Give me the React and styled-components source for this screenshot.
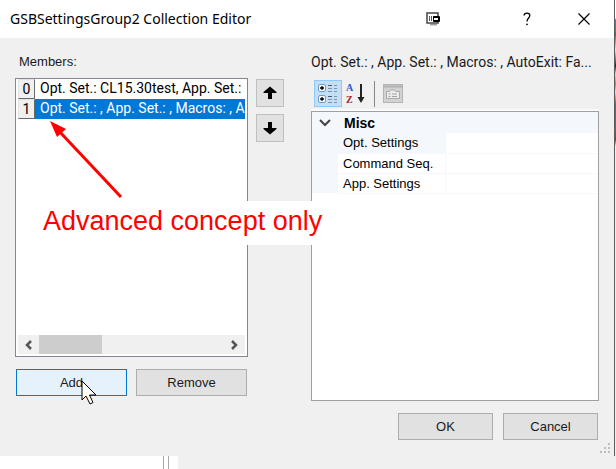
import React from "react";
import styled, { createGlobalStyle, css } from "styled-components";

const GlobalStyle = createGlobalStyle`
  *, *::before, *::after { box-sizing: border-box; }
  body {
    margin: 0;
    background: #f0f0f0;
    color: #1b1b1b;
    font: 13px/20px "Liberation Sans", Arial, sans-serif;
  }
  button { font: inherit; color: inherit; padding: 0; margin: 0; cursor: default; }
`;

const Desktop = styled.div`
  min-height: 100vh;
  display: flex;
  flex-direction: column;
`;

const DialogArea = styled.div`
  flex: 1;
  display: flex;
`;

const Dialog = styled.section`
  position: relative;
  flex: 1;
  min-width: 0;
  display: flex;
  flex-direction: column;
  background: #f0f0f0;
  border-right: 1px solid #5c5c5c;
`;

const BehindEdge = styled.div`
  width: 1px;
  background: linear-gradient(
    #fff 18px, #5577bb 20px, #5577bb 30px, #a04048 34px, #e8e8e8 50px,
    #222 66px, #dcdcdc 74px, #a98a60 84px, #e0e0e0 92px, #1b78c8 104px,
    #1b78c8 130px, #6a4a30 140px, #f0f0f0 146px
  );
`;

const TitleBar = styled.header`
  height: 38px;
  display: flex;
  align-items: center;
  background: #fff;
  padding-left: 10px;
`;

const Title = styled.h1`
  flex: 1;
  margin: 0;
  color: #000;
  font: 400 14px/20px "Noto Sans", "Open Sans", sans-serif;
  white-space: nowrap;
`;

const CaptionButton = styled.button`
  width: ${(p) => p.$width}px;
  height: 38px;
  display: grid;
  place-items: center;
  border: 0;
  background: transparent;
  color: #000;
  svg { display: block; }
`;

const Body = styled.div`
  flex: 1;
  display: grid;
  grid-template-columns: minmax(0, 269fr) minmax(0, 288fr);
  column-gap: 27px;
  padding: 0 15px 16px;
`;

const MembersArea = styled.div`
  display: grid;
  grid-template-columns: minmax(0, 1fr) 28px;
  column-gap: 8px;
  padding-bottom: 44px;
`;

const Column = styled.div`
  display: flex;
  flex-direction: column;
  min-width: 0;
`;

const PanelLabel = styled.div`
  height: 40px;
  padding: 14px 0 6px 4px;
`;

const Description = styled.div`
  height: 40px;
  padding: 14px 0 6px;
  font: 14px/20px Roboto, sans-serif;
  overflow: hidden;
  white-space: nowrap;
`;

const ListFrame = styled.div`
  flex: 1;
  display: flex;
  flex-direction: column;
  justify-content: space-between;
  background: #fff;
  border: 1px solid #828790;
  padding: 0 2px 2px;
`;

const MemberList = styled.ul`
  list-style: none;
  margin: 0;
  padding: 0;
`;

const Member = styled.li`
  height: 20px;
  display: flex;
  overflow: hidden;
  white-space: nowrap;
  color: #000;
  font: 14px/20px Roboto, sans-serif;
`;

const MemberIndex = styled.span`
  width: 17px;
  flex: none;
  text-align: center;
  background: #f0f0f0;
  border: 1px solid;
  border-color: #e3e3e3 #696969 #696969 #e3e3e3;
  line-height: 19px;
`;

const MemberText = styled.span`
  flex: 1;
  min-width: 0;
  overflow: hidden;
  padding-left: 5px;
  line-height: 18px;
  ${(p) => p.$selected && css`
    background: #0078d7;
    color: #fff;
  `}
`;

const ScrollBar = styled.div`
  height: 19px;
  display: flex;
  background: #f0f0f0;
`;

const ScrollArrow = styled.button`
  width: 21px;
  border: 0;
  background: transparent;
  display: grid;
  place-items: center;
`;

const ScrollTrack = styled.div`
  flex: 1;
`;

const ScrollThumb = styled.div`
  width: 34%;
  height: 100%;
  background: #cdcdcd;
`;

const ButtonRow = styled.div`
  display: flex;
  justify-content: ${(p) => (p.$end ? "flex-end" : "stretch")};
  gap: ${(p) => (p.$end ? 10 : 9)}px;
  padding: 12px 1px 0;
`;

const PushButton = styled.button`
  height: 27px;
  flex: ${(p) => (p.$fixed ? "0 0 95px" : "1")};
  border: 1px solid #adadad;
  background: #e1e1e1;
  ${(p) => p.$hot && css`
    border-color: #0078d7;
    background: #e5f1fb;
  `}
`;

const OrderColumn = styled.div`
  display: flex;
  flex-direction: column;
  gap: 7px;
  padding-top: 41px;
`;

const OrderButton = styled.button`
  width: 28px;
  height: 28px;
  display: grid;
  place-items: center;
  border: 1px solid #bfbfbf;
  background: #e1e1e1;
`;

const ToolBar = styled.div`
  height: 33px;
  display: flex;
  align-items: flex-start;
  padding: 2px 3px 0;
  border-bottom: 2px solid #fafafa;
`;

const ToolButton = styled.button`
  width: 28px;
  height: 27px;
  display: grid;
  place-items: center;
  border: 1px solid ${(p) => (p.$on ? "#90c8f6" : "transparent")};
  background: ${(p) => (p.$on ? "#c4dff5" : "transparent")};
`;

const ToolSeparator = styled.span`
  width: 1px;
  height: 26px;
  margin: 1px 4px;
  background: #868686;
`;

const PropertyFrame = styled.div`
  flex: 1;
  background: #fff;
  border: 1px solid #a0a0a0;
`;

const PropertyTable = styled.table`
  width: 100%;
  border-collapse: collapse;
  table-layout: fixed;
  color: #000;
`;

const Gutter = styled.td`
  height: 20px;
  padding: 0;
  background: #f4f7fc;
  svg { display: block; margin: 0 auto; }
`;

const Category = styled.th`
  height: 21px;
  padding: 0 0 0 6px;
  text-align: left;
  font: 700 14px/20px "Liberation Sans", Arial, sans-serif;
  background: #f4f7fc;
`;

const PropertyName = styled.th`
  padding: 0 0 0 5px;
  text-align: left;
  font-weight: 400;
  line-height: 19px;
  white-space: nowrap;
  border-bottom: 1px solid #f4f7fc;
  border-right: 1px solid #f4f7fc;
  background: ${(p) => (p.$current ? "#f4f7fc" : "#fff")};
`;

const PropertyValue = styled.td`
  padding: 0;
  border-bottom: 1px solid #f4f7fc;
`;

const SizeGrip = styled.svg`
  position: absolute;
  right: 2px;
  bottom: 2px;
`;

const WindowBelow = styled.footer`
  height: 13px;
  display: flex;
`;

const BelowPane = styled.div`
  width: ${(p) => p.$width};
  background: #fff;
  border-right: ${(p) => (p.$edge ? "1px solid #a8a8a8" : "0")};
`;

const Annotation = styled.div`
  position: absolute;
  left: 28px;
  top: 201px;
  width: 307px;
  height: 44px;
  padding-left: 15px;
  background: #fff;
  color: #f00;
  font: 27px/41px "Liberation Sans", Arial, sans-serif;
  white-space: nowrap;
`;

const AnnotationArrow = styled.svg`
  position: absolute;
  left: 48px;
  top: 119px;
  pointer-events: none;
`;

const Pointer = styled.svg`
  position: absolute;
  left: 81px;
  top: 380px;
  pointer-events: none;
`;

const members = [
  { text: "Opt. Set.: CL15.30test, App. Set.:", selected: false },
  { text: "Opt. Set.: , App. Set.: , Macros: , A", selected: true },
];

const properties = ["Opt. Settings", "Command Seq.", "App. Settings"];

function CaptureIcon() {
  return (
    <svg width="15" height="14" viewBox="0 0 15 14">
      <rect x="1" y="1" width="11" height="10" fill="#fff" stroke="#444" strokeWidth="1.5" />
      <path d="M3.500 4v5M5.500 4v5M7.500 4v5" stroke="#555" />
      <path d="M4 12.800h7" stroke="#777" />
      <rect x="7" y="4" width="7" height="6" rx="1" fill="#000" />
      <path d="M8 6h4v2H8z" fill="#fff" />
    </svg>
  );
}

function OrderArrow({ down }) {
  return (
    <svg width="14" height="14" viewBox="0 0 14 14">
      <path
        d={down ? "M5 1h4v6h4.500v1L7 13.500.5 8V7H5z" : "M5 13h4V7h4.500V6L7 .5.5 6v1H5z"}
        fill="#000"
      />
    </svg>
  );
}

function ScrollChevron({ right }) {
  return (
    <svg width="9" height="10" viewBox="0 0 9 10">
      <path d={right ? "M2 1l4 4-4 4" : "M7 1L3 5l4 4"} fill="none" stroke="#555" strokeWidth="2.500" />
    </svg>
  );
}

function CategorizedIcon() {
  return (
    <svg width="22" height="21" viewBox="0 0 22 21">
      {[1, 12].map((y) => (
        <g key={y}>
          <rect x="1.500" y={y + 0.5} width="7" height="7" rx="1.500" fill="#f5f9fd" stroke="#6e9cc8" />
          <path d={`M5 ${y + 2.3}v3.500M3.200 ${y + 4}h3.600`} stroke="#111" strokeWidth="1.800" />
          <path d={`M11 ${y + 1.5}h4`} stroke="#556" />
          <path
            d={`M11 ${y + 4.500}h4M11 ${y + 7.500}h4M17 ${y + 1.500}h3M17 ${y + 4.500}h3M17 ${y + 7.500}h3`}
            stroke="#7d93ab"
          />
        </g>
      ))}
    </svg>
  );
}

const SortLetter = styled.text`
  font: 700 10px "Liberation Serif", serif;
  fill: ${(p) => p.$fill};
`;

function SortIcon() {
  return (
    <svg width="22" height="24" viewBox="0 0 22 24" aria-hidden="true">
      <SortLetter x="1" y="9" $fill="#2f55cc">A</SortLetter>
      <SortLetter x="1" y="21" $fill="#a3232d">Z</SortLetter>
      <path d="M16 2v14" stroke="#222" strokeWidth="2" />
      <path d="M12.500 15h7L16 21z" fill="#222" />
    </svg>
  );
}

function PagesIcon() {
  return (
    <svg width="20" height="19" viewBox="0 0 20 19">
      <rect x="0.500" y="0.500" width="19" height="18" fill="#d2d2d2" stroke="#b4b4b4" />
      <path d="M1 1.500h18v2H1z" fill="#b0b0b0" />
      <path d="M3.500 14.500v-7h3l1-1.500h4l1 1.500h4v7z" fill="#ececec" stroke="#a9a9a9" />
      <path d="M5.500 10h2M9 10h5M5.500 12.500h2M9 12.500h5" stroke="#a2a2a2" />
    </svg>
  );
}

export default function App() {
  return (
    <Desktop>
      <GlobalStyle />
      <DialogArea>
        <Dialog role="dialog" aria-labelledby="dialog-title">
          <TitleBar>
            <Title id="dialog-title">GSBSettingsGroup2 Collection Editor</Title>
            <CaptionButton $width={132} aria-label="Capture window">
              <CaptureIcon />
            </CaptionButton>
            <CaptionButton $width={55} aria-label="Help">
              <svg width="8" height="14" viewBox="0 0 8 14">
                <path
                  d="M1 3.500C1.300 .3 6.800.3 6.800 3.600 6.800 6 4 6.200 4 9.500"
                  fill="none"
                  stroke="#000"
                  strokeWidth="1.300"
                />
                <circle cx="4" cy="12.300" r="0.900" />
              </svg>
            </CaptionButton>
            <CaptionButton $width={60} aria-label="Close">
              <svg width="12" height="12" viewBox="0 0 12 12">
                <path d="M0.500.5l11 11M11.500.5l-11 11" stroke="#000" strokeWidth="1.200" />
              </svg>
            </CaptionButton>
          </TitleBar>

          <Body>
            <MembersArea>
              <Column>
                <PanelLabel id="members-label">Members:</PanelLabel>
                <ListFrame>
                  <MemberList role="listbox" aria-labelledby="members-label">
                    {members.map((m, i) => (
                      <Member key={i} role="option" aria-selected={m.selected}>
                        <MemberIndex>{i}</MemberIndex>
                        <MemberText $selected={m.selected}>{m.text}</MemberText>
                      </Member>
                    ))}
                  </MemberList>
                  <ScrollBar>
                    <ScrollArrow aria-label="Scroll left"><ScrollChevron /></ScrollArrow>
                    <ScrollTrack><ScrollThumb /></ScrollTrack>
                    <ScrollArrow aria-label="Scroll right"><ScrollChevron right /></ScrollArrow>
                  </ScrollBar>
                </ListFrame>
                <ButtonRow>
                  <PushButton $hot>Add</PushButton>
                  <PushButton>Remove</PushButton>
                </ButtonRow>
              </Column>
              <OrderColumn>
                <OrderButton aria-label="Move up"><OrderArrow /></OrderButton>
                <OrderButton aria-label="Move down"><OrderArrow down /></OrderButton>
              </OrderColumn>
            </MembersArea>

            <Column>
              <Description>Opt. Set.: , App. Set.: , Macros: , AutoExit: Fa...</Description>
              <ToolBar>
                <ToolButton $on aria-label="Categorized"><CategorizedIcon /></ToolButton>
                <ToolButton aria-label="Alphabetical"><SortIcon /></ToolButton>
                <ToolSeparator />
                <ToolButton disabled aria-label="Property pages"><PagesIcon /></ToolButton>
              </ToolBar>
              <PropertyFrame>
                <PropertyTable>
                  <colgroup>
                    <col width="26" />
                    <col width="107" />
                    <col />
                  </colgroup>
                  <tbody>
                    <tr>
                      <Gutter>
                        <svg width="12" height="8" viewBox="0 0 12 8">
                          <path d="M1 1l5 5 5-5" fill="none" stroke="#444" strokeWidth="2" />
                        </svg>
                      </Gutter>
                      <Category colSpan={2}>Misc</Category>
                    </tr>
                    {properties.map((name, i) => (
                      <tr key={name}>
                        <Gutter />
                        <PropertyName scope="row" $current={i === 0}>{name}</PropertyName>
                        <PropertyValue />
                      </tr>
                    ))}
                  </tbody>
                </PropertyTable>
              </PropertyFrame>
              <ButtonRow $end>
                <PushButton $fixed>OK</PushButton>
                <PushButton $fixed>Cancel</PushButton>
              </ButtonRow>
            </Column>
          </Body>

          <SizeGrip width="12" height="12" viewBox="0 0 12 12" aria-hidden="true">
            <path d="M8 1h2v2H8zM4 5h2v2H4zM8 5h2v2H8zM0 9h2v2H0zM4 9h2v2H4zM8 9h2v2H8z" fill="#bdbdbd" />
          </SizeGrip>
          <Annotation>Advanced concept only</Annotation>
          <AnnotationArrow width="78" height="82" viewBox="0 0 78 82" aria-hidden="true">
            <path d="M10 11l63 67" stroke="#f00" strokeWidth="3" />
            <path d="M2 2l16 8-9 8z" fill="#f00" />
          </AnnotationArrow>
          <Pointer width="16" height="26" viewBox="0 0 16 26" aria-hidden="true">
            <path d="M1 1v19l4-4 4 8 3-1.500L8.500 15H15z" fill="#fff" stroke="#000" />
          </Pointer>
        </Dialog>
        <BehindEdge />
      </DialogArea>
      <WindowBelow>
        <BelowPane $width="164px" $edge />
        <BelowPane $width="5px" $edge />
        <BelowPane $width="9px" />
      </WindowBelow>
    </Desktop>
  );
}
